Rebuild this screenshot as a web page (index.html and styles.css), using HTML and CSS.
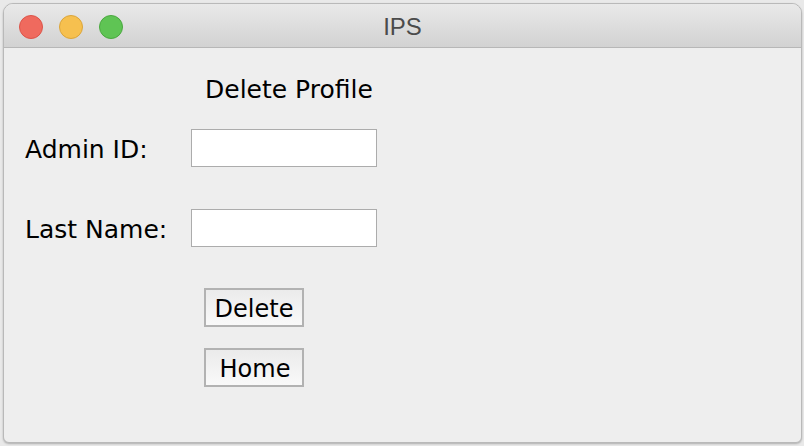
FILE: index.html
```html
<!DOCTYPE html>
<html>
<head>
<meta charset="utf-8">
<title>IPS</title>
<link rel="stylesheet" href="styles.css">
</head>
<body>
<div class="window">
  <div class="titlebar">
    <div class="lights">
      <span class="light red"></span>
      <span class="light yellow"></span>
      <span class="light green"></span>
    </div>
    <div class="title">IPS</div>
  </div>
  <div class="content">
    <div class="heading">Delete Profile</div>
    <div class="row row-first">
      <label class="label">Admin ID:</label>
      <input class="field" type="text">
    </div>
    <div class="row row-second">
      <label class="label">Last Name:</label>
      <input class="field" type="text">
    </div>
    <button class="btn btn-delete">Delete</button>
    <button class="btn btn-home">Home</button>
  </div>
</div>
</body>
</html>
```
FILE: styles.css
```css
html, body {
  margin: 0;
  padding: 0;
}
body {
  width: 804px;
  height: 446px;
  overflow: hidden;
  background: #e9e9e9;
  font-family: "DejaVu Sans", "Liberation Sans", sans-serif;
  padding-top: 3px;
  padding-left: 3px;
  box-sizing: border-box;
}
.window {
  width: 799px;
  height: 440px;
  box-sizing: border-box;
  border: 1px solid #b9b9b9;
  border-radius: 10px 10px 6px 6px;
  background: #eeeeee;
  overflow: hidden;
  box-shadow: 0 1px 2px rgba(0,0,0,0.25);
  display: flex;
  flex-direction: column;
}
.titlebar {
  height: 43px;
  flex: none;
  border-bottom: 1px solid #b7b7b7;
  background: linear-gradient(#e9e9e9, #d2d2d2);
  display: flex;
  align-items: center;
  position: relative;
}
.lights {
  display: flex;
  gap: 16px;
  padding-left: 15px;
  margin-top: 2px;
}
.light {
  width: 24px;
  height: 24px;
  border-radius: 50%;
  box-sizing: border-box;
}
.red { background: #ef6a5e; border: 1px solid #dc5449; }
.yellow { background: #f6c04f; border: 1px solid #dba53a; }
.green { background: #5fc454; border: 1px solid #4aa83f; }
.title {
  position: absolute;
  left: 0;
  right: 0;
  top: 0;
  bottom: 0;
  display: flex;
  align-items: center;
  justify-content: center;
  font-family: "Liberation Sans", "Helvetica", sans-serif;
  font-size: 24px;
  color: #4b4b4b;
  padding-top: 2px;
}
.content {
  display: flex;
  flex-direction: column;
  align-items: flex-start;
  padding-left: 21px;
  color: #000;
  font-size: 25px;
}
.heading {
  margin-top: 28px;
  margin-left: 180px;
  line-height: 28px;
  height: 28px;
}
.row {
  display: flex;
  align-items: center;
  height: 38px;
}
.row-first { margin-top: 25px; }
.row-second { margin-top: 42px; }
.label {
  width: 166px;
  font-size: 25px;
  line-height: 28px;
  padding-top: 3px;
}
.field {
  width: 186px;
  height: 38px;
  box-sizing: border-box;
  border: 1px solid #acacac;
  background: #fff;
  margin: 0;
  padding: 0 4px;
  outline: none;
  font: inherit;
}
.btn {
  margin-left: 179px;
  width: 100px;
  height: 39px;
  box-sizing: border-box;
  border: 2px solid #b2b2b2;
  border-radius: 0;
  background: linear-gradient(#ebebeb, #f9f9f9);
  font-family: inherit;
  font-size: 24px;
  color: #000;
  padding: 2px 0 0 0;
  line-height: 1;
}
.btn-delete { margin-top: 41px; }
.btn-home { margin-top: 21px; padding-left: 2px; }
```
